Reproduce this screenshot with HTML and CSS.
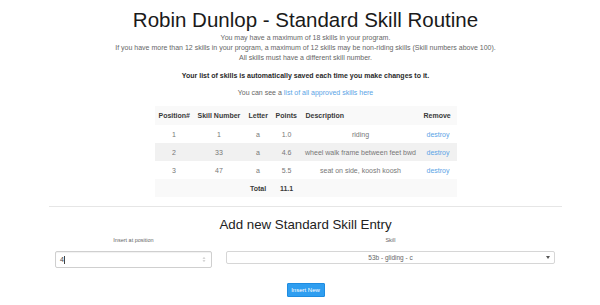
FILE: index.html
```html
<!DOCTYPE html>
<html>
<head>
<meta charset="utf-8">
<link rel="stylesheet" href="styles.css">
</head>
<body>
<div class="container">
  <h1 class="title">Robin Dunlop - Standard Skill Routine</h1>
  <p class="intro">You may have a maximum of 18 skills in your program.<br>If you have more than 12 skills in your program, a maximum of 12 skills may be non-riding skills (Skill numbers above 100).<br>All skills must have a different skill number.</p>
  <p class="saved">Your list of skills is automatically saved each time you make changes to it.</p>
  <p class="see">You can see a <a href="#">list of all approved skills here</a></p>

  <table class="skills">
    <colgroup>
      <col class="c1"><col class="c2"><col class="c3"><col class="c4"><col class="c5"><col class="c6">
    </colgroup>
    <thead>
      <tr><th>Position#</th><th>Skill Number</th><th>Letter</th><th>Points</th><th>Description</th><th>Remove</th></tr>
    </thead>
    <tbody>
      <tr><td>1</td><td>1</td><td>a</td><td>1.0</td><td>riding</td><td><a href="#">destroy</a></td></tr>
      <tr class="alt"><td>2</td><td>33</td><td>a</td><td>4.6</td><td>wheel walk frame between feet bwd</td><td><a href="#">destroy</a></td></tr>
      <tr><td>3</td><td>47</td><td>a</td><td>5.5</td><td>seat on side, koosh koosh</td><td><a href="#">destroy</a></td></tr>
    </tbody>
    <tfoot>
      <tr><td></td><td></td><td class="b">Total</td><td class="b">11.1</td><td></td><td></td></tr>
    </tfoot>
  </table>

  <hr class="rule">

  <h3 class="sub">Add new Standard Skill Entry</h3>
  <div class="form-row">
    <div class="col col-pos">
      <label class="lbl">Insert at position</label>
      <div class="numbox"><span class="val">4</span><span class="caret"></span>
        <svg class="spin" width="4" height="7" viewBox="0 0 4 7"><path d="M0.5 2.8 L2 1 L3.5 2.8 Z M0.5 4.2 L2 6 L3.5 4.2 Z" fill="#c8c8c8"/></svg>
      </div>
    </div>
    <div class="col col-skill">
      <label class="lbl">Skill</label>
      <div class="selbox"><span class="selval">53b - gliding - c</span>
        <svg class="arrow" width="4" height="3" viewBox="0 0 4 3"><path d="M0 0 L4 0 L2 3 Z" fill="#555"/></svg>
      </div>
    </div>
  </div>
  <div class="actions"><button class="btn">Insert New</button></div>
</div>
</body>
</html>
```

FILE: styles.css
```css
html, body {
  margin: 0;
  padding: 0;
  background: #fff;
}
body {
  font-family: "Liberation Sans", Arial, sans-serif;
  color: #333;
}
.container {
  width: 513px;
  margin-left: 49px;
  text-align: center;
}
.title {
  font-size: 20.5px;
  font-weight: normal;
  line-height: 22px;
  margin: 9px 0 0 0;
  color: #1a1a1a;
}
.intro {
  font-size: 7px;
  line-height: 10px;
  margin: 2px 0 0 0;
  color: #666;
}
.saved {
  font-size: 7px;
  line-height: 10px;
  margin: 8px 0 0 0;
  font-weight: bold;
  color: #2a2a2a;
}
.see {
  font-size: 7px;
  line-height: 10px;
  margin: 7px 0 0 0;
  color: #666;
}
a {
  color: #5aa4e6;
  text-decoration: none;
}
.skills {
  margin: 8px auto 0 auto;
  border-collapse: collapse;
  table-layout: fixed;
  width: 302px;
  font-size: 7px;
  background: #f9f9f9;
}
.c1 { width: 39px; }
.c2 { width: 51px; }
.c3 { width: 27px; }
.c4 { width: 30px; }
.c5 { width: 118px; }
.c6 { width: 37px; }
.skills th {
  text-align: left;
  font-weight: bold;
  color: #3a3a3a;
  height: 19px;
  padding: 0 0 0 4px;
  white-space: nowrap;
}
.skills td {
  text-align: center;
  color: #777;
  height: 18px;
  padding: 0 2px;
  white-space: nowrap;
}
.skills tbody tr { background: #fff; }
.skills tbody tr.alt { background: #f1f1f1; }
.skills td.b {
  font-weight: bold;
  color: #3a3a3a;
}
.rule {
  border: 0;
  border-top: 1px solid #e6e6e6;
  margin: 9px 0 0 0;
  height: 0;
}
.sub {
  font-size: 13.3px;
  font-weight: normal;
  line-height: 16px;
  margin: 10px 0 0 0;
  color: #222;
}
.form-row {
  display: flex;
  margin-top: 3px;
}
.col {
  display: flex;
  flex-direction: column;
  align-items: stretch;
  padding: 0 7px;
}
.col-pos { width: 157px; padding-left: 6px; padding-right: 8px; }
.col-skill { flex: 1; padding-left: 6px; padding-right: 7px; }
.lbl {
  font-size: 5.5px;
  line-height: 8px;
  color: #666;
  display: block;
  height: 8px;
}
.numbox {
  margin-top: 7px;
  height: 17px;
  box-sizing: border-box;
  border: 1px solid #cfcfcf;
  border-radius: 2px;
  box-shadow: inset 0 1px 1px rgba(0,0,0,0.06);
  display: flex;
  align-items: center;
  padding: 0 4px;
  text-align: left;
  position: relative;
}
.val {
  font-size: 7px;
  color: #444;
}
.caret {
  display: inline-block;
  width: 1px;
  height: 8px;
  background: #444;
}
.spin {
  margin-left: auto;
  margin-right: 1px;
}
.selbox {
  margin-top: 7px;
  height: 13px;
  box-sizing: border-box;
  border: 1px solid #d6d6d6;
  border-radius: 2px;
  display: flex;
  align-items: center;
  justify-content: center;
  position: relative;
  background: #fff;
}
.selval {
  font-size: 6.5px;
  color: #666;
}
.arrow {
  position: absolute;
  right: 4px;
  top: 4px;
}
.actions {
  margin-top: 10px;
  text-align: center;
}
.btn {
  font-family: "Liberation Sans", Arial, sans-serif;
  font-size: 6px;
  color: #fff;
  background: #2f9ef0;
  border: 1px solid #1f8ce0;
  border-radius: 1px;
  width: 38px;
  height: 14px;
  padding: 0;
}
```
